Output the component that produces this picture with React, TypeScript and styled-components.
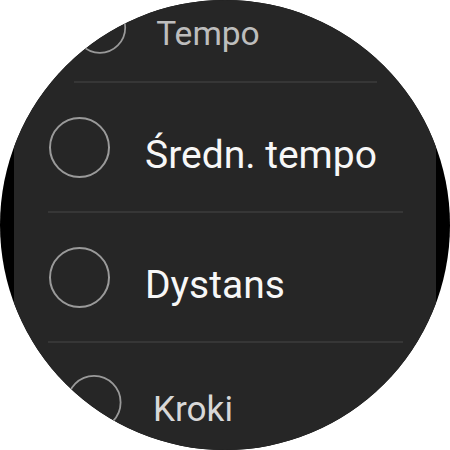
import React from "react";
import styled, { createGlobalStyle } from "styled-components";

type Item = {
  label: string;
  scale: number;
  height: number;
  tint: string;
};

const items: Item[] = [
  { label: "Tempo", scale: 0.86, height: 108, tint: "#bdbdbd" },
  { label: "Średn. tempo", scale: 1, height: 128, tint: "#f7f7f7" },
  { label: "Dystans", scale: 1, height: 128, tint: "#f7f7f7" },
  { label: "Kroki", scale: 0.9, height: 118, tint: "#d8d8d8" },
];

// width of the line under each row, narrower where the list curves away
const dividers = [303, 355, 355];

const App = () => {
  return (
    <>
      <GlobalStyle />
      <Watch>
        <Panel>
          <List>
            {items.map((item, i) => (
              <React.Fragment key={item.label}>
                <Row height={item.height}>
                  <RowContent scale={item.scale}>
                    <Radio />
                    <Label tint={item.tint}>{item.label}</Label>
                  </RowContent>
                </Row>
                {i < dividers.length && <Divider width={dividers[i]} />}
              </React.Fragment>
            ))}
          </List>
        </Panel>
      </Watch>
    </>
  );
};

export default App;

const GlobalStyle = createGlobalStyle`
  html, body {
    margin: 0;
    padding: 0;
    background: #ffffff;
  }
  body {
    font-family: Roboto, "Liberation Sans", sans-serif;
  }
`;

const Watch = styled.div`
  width: 450px;
  height: 450px;
  border-radius: 50%;
  background: #000000;
  overflow: hidden;
  display: flex;
  justify-content: center;
`;

const Panel = styled.div`
  width: 422px;
  height: 100%;
  background: #262626;
  overflow: hidden;
`;

const List = styled.div`
  display: flex;
  flex-direction: column;
  align-items: center;
  margin-top: -27px;
`;

const Row = styled.div<{ height: number }>`
  width: 100%;
  height: ${({ height }) => height}px;
  display: flex;
  align-items: center;
  flex-shrink: 0;
`;

const RowContent = styled.div<{ scale: number }>`
  width: 100%;
  display: flex;
  align-items: center;
  gap: 35px;
  padding-left: 35px;
  box-sizing: border-box;
  transform: scale(${({ scale }) => scale});
  transform-origin: center center;
`;

const Radio = styled.div`
  width: 61px;
  height: 61px;
  border-radius: 50%;
  border: 2px solid #9a9a9a;
  box-sizing: border-box;
  flex-shrink: 0;
`;

const Label = styled.span<{ tint: string }>`
  font-size: 39px;
  line-height: 1;
  color: ${({ tint }) => tint};
  white-space: nowrap;
  margin-top: 16px;
`;

const Divider = styled.div<{ width: number }>`
  width: ${({ width }) => width}px;
  height: 2px;
  background: #363636;
  flex-shrink: 0;
`;
